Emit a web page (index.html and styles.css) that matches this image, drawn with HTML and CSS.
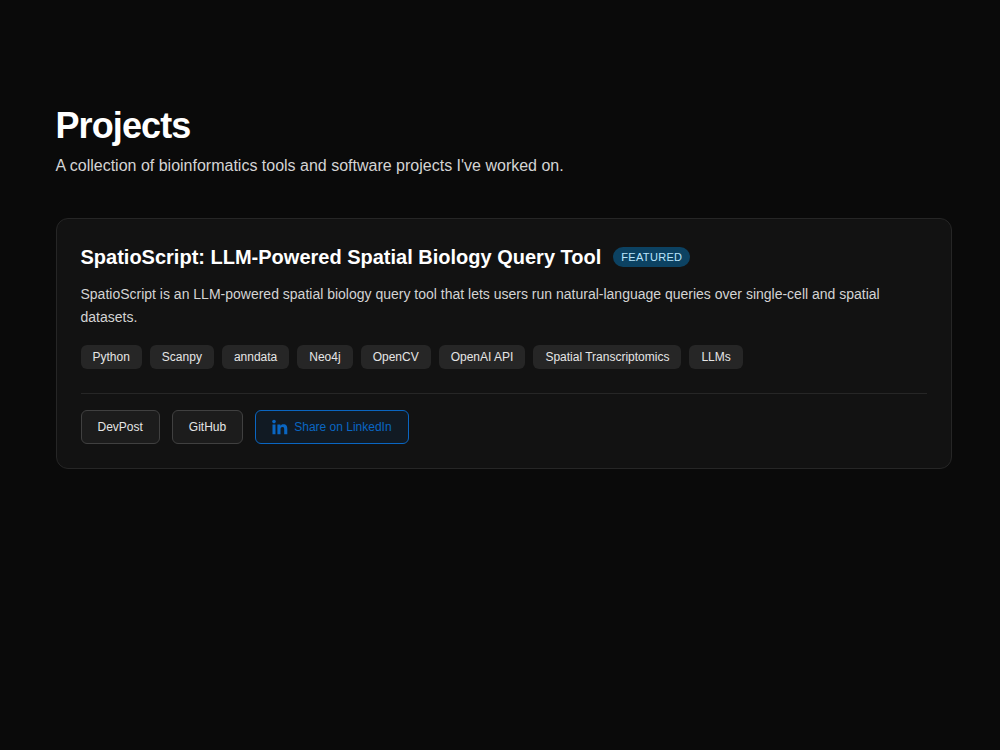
FILE: index.html
```html
<!DOCTYPE html>
<html lang="en">

<head>
    <meta charset="utf-8">
    <meta name="viewport" content="width=device-width">
    <title>Projects</title>
    <link rel="stylesheet" href="styles.css">
</head>

<body>
    <main class="container">
        <h1>Projects</h1>
        <p class="intro">A collection of bioinformatics tools and software projects I've worked on.</p>

        <div class="card">
            <div class="card-header">
                <h2>SpatioScript: LLM-Powered Spatial Biology Query Tool</h2>
                <span class="badge">FEATURED</span>
            </div>
            <p class="description">SpatioScript is an LLM-powered spatial biology query tool that lets users run natural-language queries over single-cell and spatial datasets.</p>

            <div class="tags">
                <span class="tag">Python</span>
                <span class="tag">Scanpy</span>
                <span class="tag">anndata</span>
                <span class="tag">Neo4j</span>
                <span class="tag">OpenCV</span>
                <span class="tag">OpenAI API</span>
                <span class="tag">Spatial Transcriptomics</span>
                <span class="tag">LLMs</span>
            </div>

            <div class="links">
                <a class="button" href="#">DevPost</a>
                <a class="button" href="#">GitHub</a>
                <a class="button linkedin" href="#">
                    <svg class="icon" viewBox="0 0 16 16" fill="currentColor">
                        <circle cx="2" cy="2.6" r="1.8" />
                        <path d="M.5 5.500h3v9.800h-3zM5.400 5.500h3v1.300c.5-.9 1.500-1.500 3-1.500 3 0 3.900 1.900 3.900 4.600v5.400h-3.100v-4.800c0-1.300 0-2.600-1.700-2.600s-2 1.200-2 2.500v4.900H5.400z" />
                    </svg>
                    Share on LinkedIn
                </a>
            </div>
        </div>
    </main>
</body>

</html>
```
FILE: styles.css
```css
* {
    box-sizing: border-box;
    margin: 0;
    padding: 0;
}

body {
    background-color: #0a0a0a;
    color: #fff;
    font-family: "Liberation Sans", Arial, sans-serif;
}

.container {
    width: 896px;
    margin-left: 55.5px;
    padding-top: 106px;
}

h1 {
    font-size: 36px;
    line-height: 40px;
    letter-spacing: -0.025em;
}

.intro {
    margin-top: 8px;
    font-size: 16px;
    line-height: 24px;
    color: #d4d4d4;
}

.card {
    margin-top: 40px;
    padding: 24px;
    border: 1px solid #262626;
    border-radius: 12px;
    background-color: #121212;
}

.card-header {
    display: flex;
    align-items: center;
    gap: 12px;
}

h2 {
    font-size: 20px;
    line-height: 28px;
}

.badge {
    padding: 2px 8px;
    border-radius: 10px;
    background-color: #0c4262;
    color: #bae6fd;
    font-size: 11px;
    line-height: 16px;
    letter-spacing: 0.03em;
}

.description {
    margin-top: 12px;
    font-size: 14px;
    line-height: 22.75px;
    color: #d4d4d4;
}

.tags {
    display: flex;
    gap: 8px;
    margin-top: 16px;
}

.tag {
    padding: 4px 12px;
    border-radius: 6px;
    background-color: #262626;
    color: #e5e5e5;
    font-size: 12px;
    line-height: 16px;
}

.links {
    display: flex;
    gap: 12px;
    margin-top: 24px;
    padding-top: 16px;
    border-top: 1px solid #262626;
}

.button {
    display: flex;
    align-items: center;
    padding: 8px 16px;
    border: 1px solid #404040;
    border-radius: 6px;
    background-color: #1c1c1c;
    color: #e5e5e5;
    font-size: 12px;
    line-height: 16px;
    text-decoration: none;
}

.linkedin {
    gap: 6px;
    border-color: #0a66c2;
    background-color: #111a23;
    color: #0a66c2;
}

.icon {
    width: 16px;
    height: 16px;
}
```
